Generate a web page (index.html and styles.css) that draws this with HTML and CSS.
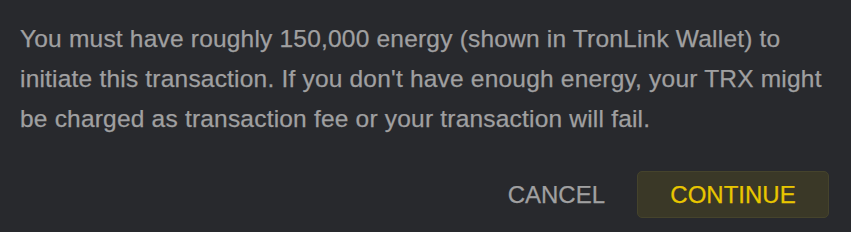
FILE: index.html
```html
<!DOCTYPE html>
<html>
<head>
<meta charset="utf-8">
<link rel="stylesheet" href="styles.css">
</head>
<body>
<div class="dialog">
  <p class="message">You must have roughly 150,000 energy (shown in TronLink Wallet) to initiate this transaction. If you don't have enough energy, your TRX might be charged as transaction fee or your transaction will fail.</p>
  <div class="actions">
    <button class="btn btn-cancel">CANCEL</button>
    <button class="btn btn-continue">CONTINUE</button>
  </div>
</div>
</body>
</html>
```
FILE: styles.css
```css
html, body {
  margin: 0;
  padding: 0;
  background: #28292d;
}
.dialog {
  width: 851px;
  height: 232px;
  box-sizing: border-box;
  padding: 19px 16px 0 20px;
  font-family: "Liberation Sans", Arial, sans-serif;
}
.message {
  margin: 0;
  color: #a0a0a1;
  font-size: 24.5px;
  letter-spacing: 0.2px;
  line-height: 40px;
  -webkit-text-stroke: 0.25px #a0a0a1;
}
.actions {
  display: flex;
  justify-content: flex-end;
  align-items: center;
  gap: 32px;
  margin: 32px 6px 0 0;
}
.btn {
  font-family: inherit;
  font-size: 24px;
  border: none;
  background: none;
  cursor: pointer;
  padding: 0;
}
.btn-cancel {
  color: #a0a0a1;
  -webkit-text-stroke: 0.25px #a0a0a1;
}
.btn-continue {
  color: #e8c600;
  -webkit-text-stroke: 0.25px #e8c600;
  background: #3a3827;
  border: 1px solid #45432c;
  border-radius: 5px;
  width: 192px;
  height: 47px;
}
```
